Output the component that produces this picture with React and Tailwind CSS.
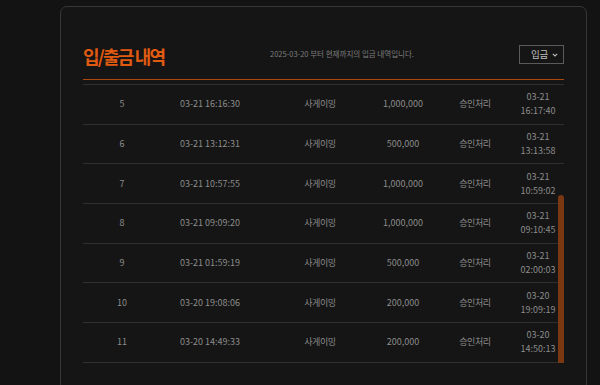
import React from "react";

const rows = [
  ["5", "03-21 16:16:30", "1,000,000", "03-21", "16:17:40"],
  ["6", "03-21 13:12:31", "500,000", "03-21", "13:13:58"],
  ["7", "03-21 10:57:55", "1,000,000", "03-21", "10:59:02"],
  ["8", "03-21 09:09:20", "1,000,000", "03-21", "09:10:45"],
  ["9", "03-21 01:59:19", "500,000", "03-21", "02:00:03"],
  ["10", "03-20 19:08:06", "200,000", "03-20", "19:09:19"],
  ["11", "03-20 14:49:33", "200,000", "03-20", "14:50:13"],
];

const font = { fontFamily: '"Noto Sans CJK KR", "Noto Sans", sans-serif' };

export default function App() {
  return (
    <div
      className="w-[600px] h-[385px] overflow-hidden bg-[#131313] pt-[6px] pl-[60px]"
      style={font}
    >
      <div className="w-[527px] h-[385px] rounded-[7px] border border-[#363636] bg-[#151515] px-[22px]">
        <div className="h-[72px] pt-[38px] flex items-start">
          <div className="w-[150px] mt-[-2px] text-[18px] leading-[26px] font-bold tracking-[-1.8px] text-[#e05a12]">
            입/출금 내역
          </div>
          <div className="flex-1 flex justify-center mt-[4px] pr-[68px] text-[7.5px] leading-[10px] text-[#7d7d7d]">
            2025-03-20 부터 현재까지의 입금 내역입니다.
          </div>
          <div className="w-[45px] h-[19px] border border-[#5a5a5a] flex items-center justify-between pl-[11px] pr-[5px]">
            <span className="text-[9.5px] leading-none tracking-[-0.3px] text-[#bdbdbd]">입금</span>
            <svg width="6" height="4" viewBox="0 0 6 4" fill="none">
              <path d="M0.8 0.8 L3 3 L5.2 0.8" stroke="#bdbdbd" strokeWidth="1.1" />
            </svg>
          </div>
        </div>
        <div className="h-px bg-[#a9490f]" />
        <div className="h-[4px]" />
        <div className="relative border-t border-[#2f2f2f]">
          {rows.map((r) => (
            <div
              key={r[0]}
              className="h-[39.7px] border-b border-[#2f2f2f] grid grid-cols-[78px_98px_122px_44px_100px_26px] items-center text-[9px] leading-[14px] text-[#8c8c8c]"
            >
              <div className="flex justify-center">{r[0]}</div>
              <div className="flex justify-center whitespace-nowrap">{r[1]}</div>
              <div className="flex justify-center whitespace-nowrap tracking-[-0.4px]">사게이밍</div>
              <div className="flex justify-center whitespace-nowrap">{r[2]}</div>
              <div className="flex justify-center whitespace-nowrap tracking-[-0.4px]">승인처리</div>
              <div className="flex flex-col items-center whitespace-nowrap">
                <span>{r[3]}</span>
                <span>{r[4]}</span>
              </div>
            </div>
          ))}
          <div className="absolute right-0 top-[110px] w-[6px] h-[168px] rounded-t-[3px] bg-[#7a3812]" />
        </div>
      </div>
    </div>
  );
}
